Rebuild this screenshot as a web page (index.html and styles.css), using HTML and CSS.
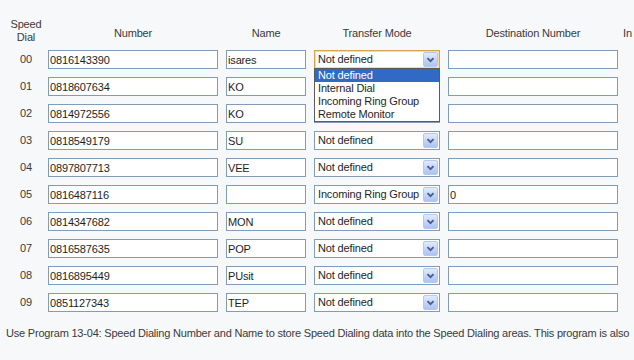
FILE: index.html
```html
<!DOCTYPE html>
<html lang="en">
<head>
  <meta charset="UTF-8" />
  <title>Speed Dial</title>
  <link rel="stylesheet" href="styles.css">
</head>
<body>
  <div class="sd-table">
    <div class="sd-row sd-head">
      <div class="dial">Speed<br>Dial</div>
      <div class="col-number">Number</div>
      <div class="col-name">Name</div>
      <div class="col-mode">Transfer Mode</div>
      <div class="col-dest">Destination Number</div>
      <div class="col-more">In</div>
    </div>

    <div class="sd-row">
      <div class="dial">00</div>
      <input class="field f-number" value="0816143390">
      <input class="field f-name" value="isares">
      <div class="mode-cell">
        <div class="select is-open"><span>Not defined</span><i class="arrow"><svg viewBox="0 0 15 15"><path d="M4 6l3.5 3.5L11 6" /></svg></i></div>
        <ul class="options">
          <li class="selected">Not defined</li>
          <li>Internal Dial</li>
          <li>Incoming Ring Group</li>
          <li>Remote Monitor</li>
        </ul>
      </div>
      <input class="field f-dest" value="">
    </div>

    <div class="sd-row">
      <div class="dial">01</div>
      <input class="field f-number" value="0818607634">
      <input class="field f-name" value="KO">
      <div class="mode-cell"><div class="select covered"><span>Not defined</span><i class="arrow"><svg viewBox="0 0 15 15"><path d="M4 6l3.5 3.5L11 6" /></svg></i></div></div>
      <input class="field f-dest" value="">
    </div>

    <div class="sd-row">
      <div class="dial">02</div>
      <input class="field f-number" value="0814972556">
      <input class="field f-name" value="KO">
      <div class="mode-cell"><div class="select covered"><span>Not defined</span><i class="arrow"><svg viewBox="0 0 15 15"><path d="M4 6l3.5 3.5L11 6" /></svg></i></div></div>
      <input class="field f-dest" value="">
    </div>

    <div class="sd-row">
      <div class="dial">03</div>
      <input class="field f-number" value="0818549179">
      <input class="field f-name" value="SU">
      <div class="mode-cell"><div class="select"><span>Not defined</span><i class="arrow"><svg viewBox="0 0 15 15"><path d="M4 6l3.5 3.5L11 6" /></svg></i></div></div>
      <input class="field f-dest" value="">
    </div>

    <div class="sd-row">
      <div class="dial">04</div>
      <input class="field f-number" value="0897807713">
      <input class="field f-name" value="VEE">
      <div class="mode-cell"><div class="select"><span>Not defined</span><i class="arrow"><svg viewBox="0 0 15 15"><path d="M4 6l3.5 3.5L11 6" /></svg></i></div></div>
      <input class="field f-dest" value="">
    </div>

    <div class="sd-row">
      <div class="dial">05</div>
      <input class="field f-number" value="0816487116">
      <input class="field f-name" value="">
      <div class="mode-cell"><div class="select"><span>Incoming Ring Group</span><i class="arrow"><svg viewBox="0 0 15 15"><path d="M4 6l3.5 3.5L11 6" /></svg></i></div></div>
      <input class="field f-dest" value="0">
    </div>

    <div class="sd-row">
      <div class="dial">06</div>
      <input class="field f-number" value="0814347682">
      <input class="field f-name" value="MON">
      <div class="mode-cell"><div class="select"><span>Not defined</span><i class="arrow"><svg viewBox="0 0 15 15"><path d="M4 6l3.5 3.5L11 6" /></svg></i></div></div>
      <input class="field f-dest" value="">
    </div>

    <div class="sd-row">
      <div class="dial">07</div>
      <input class="field f-number" value="0816587635">
      <input class="field f-name" value="POP">
      <div class="mode-cell"><div class="select"><span>Not defined</span><i class="arrow"><svg viewBox="0 0 15 15"><path d="M4 6l3.5 3.5L11 6" /></svg></i></div></div>
      <input class="field f-dest" value="">
    </div>

    <div class="sd-row">
      <div class="dial">08</div>
      <input class="field f-number" value="0816895449">
      <input class="field f-name" value="PUsit">
      <div class="mode-cell"><div class="select"><span>Not defined</span><i class="arrow"><svg viewBox="0 0 15 15"><path d="M4 6l3.5 3.5L11 6" /></svg></i></div></div>
      <input class="field f-dest" value="">
    </div>

    <div class="sd-row">
      <div class="dial">09</div>
      <input class="field f-number" value="0851127343">
      <input class="field f-name" value="TEP">
      <div class="mode-cell"><div class="select"><span>Not defined</span><i class="arrow"><svg viewBox="0 0 15 15"><path d="M4 6l3.5 3.5L11 6" /></svg></i></div></div>
      <input class="field f-dest" value="">
    </div>
  </div>

  <p class="help">Use Program 13-04: Speed Dialing Number and Name to store Speed Dialing data into the Speed Dialing areas. This program is also</p>
</body>
</html>
```

FILE: styles.css
```css
html, body {
  overflow: hidden;
}
body {
  margin: 0;
  padding-top: 18px;
  background: #f6f8fa;
  color: #3a3a3a;
  font-family: "Liberation Sans", Arial, sans-serif;
  font-size: 11px;
  line-height: 13px;
  letter-spacing: -0.15px;
}
.sd-table {
  display: flex;
  flex-direction: column;
  gap: 8px;
}
.sd-row {
  display: grid;
  grid-template-columns: 48px 178px 88px 134px 175px 1fr;
  align-items: center;
  height: 19px;
}
.sd-head {
  height: 26px;
  margin-bottom: -2px;
}
.sd-head > div {
  padding-top: 4px;
}
.sd-head .dial {
  padding-top: 0;
}
.dial {
  padding-left: 4px;
  text-align: center;
}
.col-number { width: 170px; text-align: center; }
.col-name { width: 80px; text-align: center; }
.col-mode { width: 126px; text-align: center; }
.col-dest { width: 170px; text-align: center; }
.col-more { white-space: nowrap; }

.field {
  box-sizing: border-box;
  height: 19px;
  margin: 0;
  padding: 0 1px;
  border: 1px solid #7f9db9;
  background: #fff;
  color: #1e1e1e;
  font: 11px "Liberation Sans", Arial, sans-serif;
  letter-spacing: -0.15px;
  outline: none;
}
.f-number { width: 170px; }
.f-name { width: 80px; }
.f-dest { width: 170px; }

.mode-cell {
  position: relative;
  width: 126px;
  height: 19px;
}
.select {
  box-sizing: border-box;
  height: 19px;
  display: flex;
  align-items: center;
  justify-content: space-between;
  padding: 0 1px 0 3px;
  border: 1px solid #7f9db9;
  background: #fff;
  color: #1e1e1e;
  white-space: nowrap;
}
.select.is-open {
  border-color: #d6a54a;
  box-shadow: inset 0 0 0 1px #f3dca4;
}
/* rows hidden under the open list */
.select.covered span {
  visibility: hidden;
}
.arrow {
  box-sizing: border-box;
  flex: none;
  width: 15px;
  height: 15px;
  border: 1px solid #b4c8f0;
  border-radius: 2px;
  background: linear-gradient(#e2eafd, #c3d4f9 55%, #adc3f3);
}
.arrow svg {
  display: block;
  width: 13px;
  height: 13px;
  fill: none;
  stroke: #4a5f86;
  stroke-width: 2.2;
}

.options {
  position: absolute;
  top: 18px;
  left: 0;
  z-index: 2;
  box-sizing: border-box;
  width: 126px;
  margin: 0;
  padding: 0;
  list-style: none;
  border: 1px solid #5a5a5a;
  background: #fff;
  color: #1e1e1e;
}
.options li {
  height: 13px;
  padding-left: 3px;
  white-space: nowrap;
}
.options li.selected {
  background: #316ac5;
  color: #fff;
}

.help {
  margin: 15px 0 0 6px;
  white-space: nowrap;
  letter-spacing: -0.2px;
}
```
